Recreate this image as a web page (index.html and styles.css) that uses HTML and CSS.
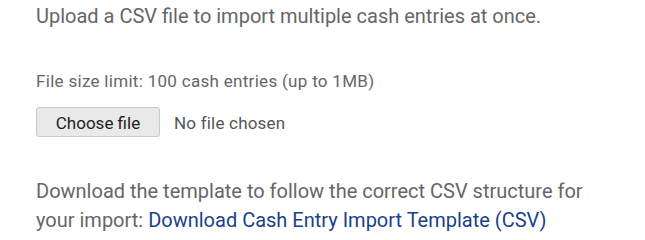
FILE: index.html
```html
<!DOCTYPE html>
<html lang="en">
<head>
<meta charset="utf-8">
<link rel="stylesheet" href="styles.css">
</head>
<body>
<div class="panel">
  <p class="intro">Upload a CSV file to import multiple cash entries at once.</p>
  <p class="limit">File size limit: 100 cash entries (up to 1MB)</p>
  <div class="file-row">
    <label class="file-btn">Choose file<input type="file" class="file-input" accept=".csv"></label>
    <span class="file-name">No file chosen</span>
  </div>
  <p class="template">Download the template to follow the correct CSV structure for your import: <a class="template-link" href="#">Download Cash Entry Import Template (CSV)</a></p>
</div>
</body>
</html>
```

FILE: styles.css
```css
html, body {
  margin: 0;
  padding: 0;
  background: #ffffff;
}
body {
  font-family: Roboto, "Liberation Sans", sans-serif;
  color: #666666;
}
.panel {
  padding: 2px 0 0 36px;
  width: 580px;
}
.intro {
  margin: 0;
  font-size: 20px;
  line-height: 29px;
}
.limit {
  margin: 38px 0 0;
  font-size: 17px;
  letter-spacing: 0.3px;
  line-height: 24px;
}
.file-row {
  display: flex;
  align-items: center;
  gap: 14px;
  margin-top: 14px;
}
.file-btn {
  display: inline-flex;
  align-items: center;
  justify-content: center;
  box-sizing: border-box;
  width: 124px;
  height: 30px;
  padding-top: 2px;
  background: #e9e9e9;
  border: 1px solid #c9c9c9;
  border-radius: 3px;
  font-size: 17px;
  color: #222222;
  cursor: pointer;
}
.file-input {
  display: none;
}
.file-name {
  font-size: 17px;
  letter-spacing: 0.2px;
  color: #555555;
  padding-top: 2px;
}
.template {
  margin: 40px 0 0;
  font-size: 20px;
  line-height: 29px;
}
.template-link {
  color: #1a3f8c;
  text-decoration: none;
}
```
